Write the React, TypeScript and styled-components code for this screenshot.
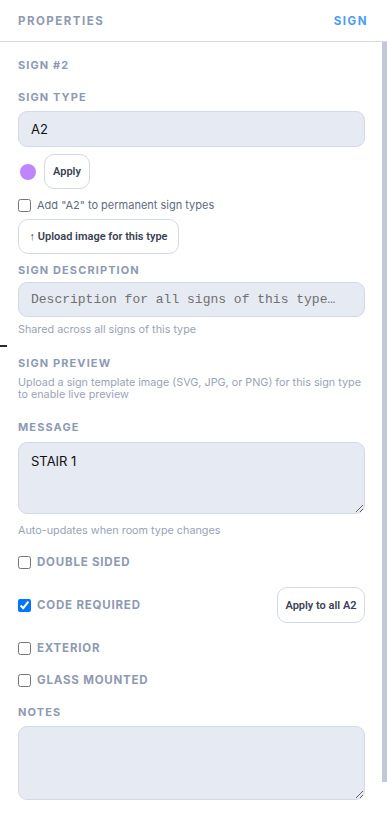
import React from 'react';
import styled, { createGlobalStyle } from 'styled-components';

const GlobalStyle = createGlobalStyle`
html, body {
  margin: 0;
  padding: 0;
  background: #fff;
}

body {
  font-family: Inter, "Noto Sans", sans-serif;
  color: #1f2937;
}
`;

const Panel = styled.div`
position: relative;
display: flex;
flex-direction: column;
width: 100vw;
height: 100vh;
overflow: hidden;
background: #fff;
`;

const Header = styled.div`
display: flex;
justify-content: space-between;
align-items: center;
box-sizing: border-box;
height: 42px;
padding: 0 19px 0 18px;
border-bottom: 1px solid #d6dae3;
flex-shrink: 0;
`;

const HeaderTitle = styled.div<{ $accent?: boolean }>`
font-size: 11.5px;
font-weight: 700;
letter-spacing: 1.5px;
color: ${p => (p.$accent ? '#4b9cf5' : '#8e9ab2')};
`;

const Body = styled.div`
position: relative;
flex: 1;
min-height: 0;
overflow: hidden;
`;

/* headless screenshots hide native scrollbars, so the thumb is drawn over the edge */
const ScrollThumb = styled.div`
position: absolute;
top: 0;
right: 0;
width: 5px;
height: 740px;
background: #c2c8d7;
`;

const Content = styled.div`
display: flex;
flex-direction: column;
padding: 16px 22px 49px 18px;
`;

const Label = styled.div<{ $mt?: number; $mb?: number }>`
margin-top: ${p => p.$mt ?? 0}px;
margin-bottom: ${p => p.$mb ?? 0}px;
font-size: 11px;
line-height: 14px;
font-weight: 700;
letter-spacing: 1.1px;
color: #8e9ab2;
`;

const TextInput = styled.input<{ $mono?: boolean }>`
box-sizing: border-box;
width: 100%;
height: ${p => (p.$mono ? 35 : 36)}px;
padding: 0 12px;
border: 1px solid #d3d9e6;
border-radius: 9px;
background: #e6eaf3;
font-family: ${p => (p.$mono ? '"Liberation Mono", "DejaVu Sans Mono", monospace' : 'Inter, sans-serif')};
font-size: 13px;
color: #111;
outline: none;

&::placeholder {
  color: #707070;
}
`;

const TextArea = styled.textarea<{ $h: number }>`
display: block;
box-sizing: border-box;
width: 100%;
height: ${p => p.$h}px;
padding: 10px 12px;
border: 1px solid #d3d9e6;
border-radius: 9px;
background: #e6eaf3;
font-family: Inter, sans-serif;
font-size: 13px;
line-height: 17px;
color: #111;
outline: none;
resize: vertical;
`;

const ColorRow = styled.div`
display: flex;
align-items: center;
gap: 8px;
margin: 7px 0 9px 2px;
`;

const ColorDot = styled.span<{ $color: string }>`
width: 16px;
height: 16px;
border-radius: 50%;
background: ${p => p.$color};
`;

const Button = styled.button`
box-sizing: border-box;
height: 35px;
padding: 0 8px;
border: 1px solid #d3d9e6;
border-radius: 10px;
background: #fff;
font-family: Roboto, "Liberation Sans", sans-serif;
font-size: 11px;
font-weight: 600;
color: #3a4254;
white-space: nowrap;
cursor: pointer;
`;

const UploadButton = styled(Button)`
align-self: flex-start;
width: 161px;
padding: 0;
margin-top: 7px;
`;

const ApplyAllButton = styled(Button)`
height: 36px;
width: 88px;
padding: 0;
`;

const CheckRow = styled.label<{ $h?: number; $mt?: number; $mb?: number }>`
display: flex;
align-items: center;
gap: 6px;
height: ${p => p.$h ?? 20}px;
margin-top: ${p => p.$mt ?? 0}px;
margin-bottom: ${p => p.$mb ?? 0}px;
`;

const Check = styled.input`
width: 13px;
height: 13px;
margin: 0;
flex-shrink: 0;
`;

const CheckText = styled.span`
font-size: 11px;
color: #5f6b7f;
`;

const FlagText = styled.span`
font-size: 11.5px;
font-weight: 700;
letter-spacing: 0.8px;
color: #8e9ab2;
`;

const Spacer = styled.div`
flex: 1;
`;

const Hint = styled.div<{ $mt?: number }>`
margin-top: ${p => p.$mt ?? 0}px;
font-size: 10.8px;
line-height: 12.5px;
color: #9aa3b6;
`;

const EdgeMark = styled.span`
position: absolute;
left: 0;
top: 345px;
width: 7px;
height: 2px;
background: #2b2b2b;
`;

const flags = [
  { name: 'DOUBLE SIDED', checked: false },
  { name: 'CODE REQUIRED', checked: true },
  { name: 'EXTERIOR', checked: false },
  { name: 'GLASS MOUNTED', checked: false },
];

function App() {
  return (
    <Panel>
      <GlobalStyle />
      <EdgeMark />
      <Header>
        <HeaderTitle>PROPERTIES</HeaderTitle>
        <HeaderTitle $accent>SIGN</HeaderTitle>
      </Header>
      <Body>
        <ScrollThumb />
        <Content>
          <Label>SIGN #2</Label>

          <Label $mt={18} $mb={7}>SIGN TYPE</Label>
          <TextInput defaultValue="A2" />
          <ColorRow>
            <ColorDot $color="#c084fc" />
            <Button>Apply</Button>
          </ColorRow>
          <CheckRow $h={14}>
            <Check type="checkbox" />
            <CheckText>Add "A2" to permanent sign types</CheckText>
          </CheckRow>
          <UploadButton>↑ Upload image for this type</UploadButton>

          <Label $mt={9} $mb={5}>SIGN DESCRIPTION</Label>
          <TextInput $mono placeholder="Description for all signs of this type…" />
          <Hint $mt={7}>Shared across all signs of this type</Hint>

          <Label $mt={19}>SIGN PREVIEW</Label>
          <Hint $mt={7}>
            Upload a sign template image (SVG, JPG, or PNG) for this sign type to enable live preview
          </Hint>

          <Label $mt={18} $mb={8}>MESSAGE</Label>
          <TextArea $h={72} defaultValue="STAIR 1" />
          <Hint $mt={11}>Auto-updates when room type changes</Hint>

          <CheckRow $mt={15} $mb={15}>
            <Check type="checkbox" />
            <FlagText>{flags[0].name}</FlagText>
          </CheckRow>
          <CheckRow $h={36} $mb={15}>
            <Check type="checkbox" defaultChecked={flags[1].checked} />
            <FlagText>{flags[1].name}</FlagText>
            <Spacer />
            <ApplyAllButton>Apply to all A2</ApplyAllButton>
          </CheckRow>
          <CheckRow $mb={12}>
            <Check type="checkbox" />
            <FlagText>{flags[2].name}</FlagText>
          </CheckRow>
          <CheckRow>
            <Check type="checkbox" />
            <FlagText>{flags[3].name}</FlagText>
          </CheckRow>

          <Label $mt={15} $mb={7}>NOTES</Label>
          <TextArea $h={74} />
        </Content>
      </Body>
    </Panel>
  );
}

export default App;
